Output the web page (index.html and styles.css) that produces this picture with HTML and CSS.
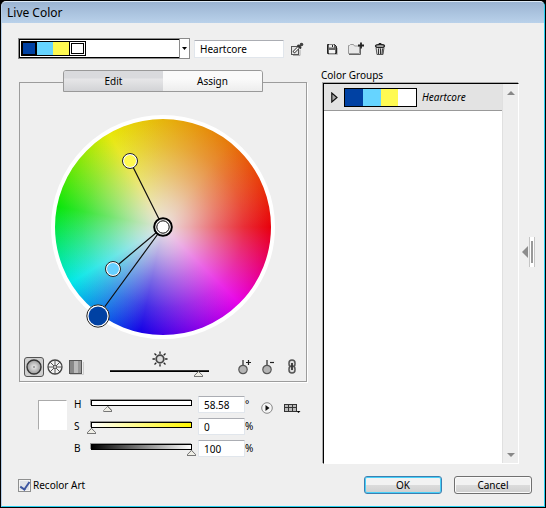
FILE: index.html
```html
<!DOCTYPE html>
<html lang="en">
<head>
<meta charset="utf-8">
<title>Live Color</title>
<link rel="stylesheet" href="styles.css">
</head>
<body>
<form class="dialog">
  <header class="titlebar"><h1>Live Color</h1></header>

  <div class="toolbar">
    <div class="combo">
      <div class="chips">
        <span class="chip navy picked"></span><span class="chip sky"></span><span class="chip yellow"></span><span class="chip white base"></span>
      </div>
      <button type="button" class="combo-arrow" aria-label="Harmony rules"><svg width="6" height="4" viewBox="0 0 6 4"><path d="M0 0h5L2.500 3z"/></svg></button>
    </div>
    <input class="field name" type="text" value="Heartcore" aria-label="Group name">
    <button type="button" class="icon pick" aria-label="Get colors from selected art">
      <svg width="14" height="14" viewBox="0 0 14 14"><path d="M3 13.500h7V8" fill="none" stroke="#aaa"/><rect x="1.500" y="4.500" width="7" height="8" fill="#e4e4e4" stroke="#555"/><path d="M3.500 10.500L8.500 5.500" stroke="#333" stroke-width="2.800"/><path d="M4 10L8.500 5.500" stroke="#fff" stroke-width="1.200"/><path d="M7.500 3l3.500 3.500M9 5l2.500-2.500" stroke="#333" stroke-width="2"/><circle cx="11.500" cy="2.500" r="1.800" fill="#444"/></svg>
    </button>
    <div class="group-tools">
      <button type="button" class="icon" aria-label="Save changes">
        <svg width="14" height="14" viewBox="0 0 14 14"><path d="M2.500 2.500h7l2 2v7h-9z" fill="#666" stroke="#222"/><path d="M4 2.500h5v3H4z" fill="#eee"/><path d="M7.500 3v2" stroke="#222"/><path d="M4 8h6v3.500H4z" fill="#f4f4f4"/><path d="M3 12.500h9.500V6" stroke="#bbb" fill="none"/></svg>
      </button>
      <button type="button" class="icon" aria-label="New color group">
        <svg width="18" height="14" viewBox="0 0 18 14"><path d="M1.500 11.500v-8h1l1-1h3l1 1.500h5v7.500z" fill="#e8e8e8" stroke="#999"/><path d="M2 12.500h11.500V6" fill="none" stroke="#666"/><path d="M14 .5v6M11 3.500h6" stroke="#222" stroke-width="1.800"/></svg>
      </button>
      <button type="button" class="icon" aria-label="Delete color group">
        <svg width="14" height="14" viewBox="0 0 14 14"><path d="M3 5.500h8l-1 7H4z" fill="#ddd" stroke="#555"/><path d="M5.500 6.500v5.500M7.500 6.500v5.500M9.500 6.500L9 12" stroke="#333"/><ellipse cx="7" cy="4" rx="4.500" ry="1.500" fill="#ccc" stroke="#222" stroke-width="1.300"/><path d="M5.500 2q1.500-1.500 3 0" stroke="#222" fill="none"/></svg>
      </button>
    </div>
  </div>

  <main class="columns">
    <section class="editor">
      <div class="panel">
        <div class="tabs">
          <button type="button" class="tab current">Edit</button><button type="button" class="tab">Assign</button>
        </div>
        <div class="wheel">
          <svg viewBox="0 0 224 224">
            <g stroke="#111" stroke-width="1.200"><path d="M112 112L79 46M112 112L62 154M112 112L47 201"/></g>
            <g stroke="#222">
              <circle cx="79" cy="46" r="7.500" fill="#fff"/><circle cx="62" cy="154" r="7.500" fill="#fff"/><circle cx="47" cy="201" r="11.200" fill="#fff"/>
            </g>
            <circle cx="79" cy="46" r="6" fill="#fffa52"/><circle cx="62" cy="154" r="6" fill="#66d0ff"/><circle cx="47" cy="201" r="9.500" fill="#0041a3"/>
            <circle cx="112" cy="112" r="8.800" fill="#fff" stroke="#000" stroke-width="2"/><circle cx="112" cy="112" r="6.200" fill="#fff" stroke="#000"/>
          </svg>
        </div>
        <div class="wheel-tools">
          <button type="button" class="icon mode on" aria-label="Smooth wheel">
            <svg width="18" height="18" viewBox="0 0 18 18"><defs><radialGradient id="ball"><stop offset="0" stop-color="#eee"/><stop offset="1" stop-color="#999"/></radialGradient></defs><circle cx="9" cy="9" r="7" fill="url(#ball)" stroke="#333" stroke-width="1.400"/><path d="M8 9h2M9 8v2" stroke="#666" stroke-width=".6"/></svg>
          </button>
          <button type="button" class="icon mode" aria-label="Segmented wheel">
            <svg width="18" height="18" viewBox="0 0 18 18"><circle cx="9" cy="9" r="7" fill="#f2f2f2" stroke="#444" stroke-width="1.300"/><path d="M9 2v14M2 9h14M4 4l10 10M14 4L4 14" stroke="#555"/><circle cx="9" cy="9" r="1.500" fill="#eee" stroke="#333" stroke-width=".7"/></svg>
          </button>
          <button type="button" class="icon mode" aria-label="Color bars">
            <svg width="18" height="18" viewBox="0 0 18 18"><path d="M3 16.500h13.500V4" stroke="#ccc" fill="none"/><rect x="2.500" y="2.500" width="12" height="13" fill="#aaa" stroke="#555"/><path d="M3 3h4v12H3z" fill="#888"/><path d="M7 3h4v12H7z" fill="#bbb"/><path d="M11 3h3v12h-3z" fill="#999"/></svg>
          </button>
          <div class="brightness">
            <svg width="16" height="16" viewBox="0 0 16 16"><path d="M8 .5v15M.5 8h15M2.500 2.500l11 11M13.500 2.500l-11 11" stroke="#222" stroke-width="1.300"/><circle cx="8" cy="8" r="5.200" fill="#eee"/><circle cx="8" cy="8" r="3.800" fill="#ddd" stroke="#444" stroke-width="1.800"/></svg>
            <div class="track line"><input type="range" min="0" max="100" value="89" aria-label="Brightness"></div>
          </div>
          <button type="button" class="icon add" aria-label="Add color tool">
            <svg width="16" height="18" viewBox="0 0 16 18"><path d="M6 2v7" stroke="#333" stroke-width="1.300"/><circle cx="6" cy="11.500" r="4.200" fill="#b4b4b4" stroke="#555" stroke-width="1.200"/><path d="M9 4.500h5M11.500 2v5" stroke="#222" stroke-width="1.200"/></svg>
          </button>
          <button type="button" class="icon remove" aria-label="Remove color tool">
            <svg width="16" height="18" viewBox="0 0 16 18"><path d="M6 2v7" stroke="#333" stroke-width="1.300"/><circle cx="6" cy="11.500" r="4.200" fill="#b4b4b4" stroke="#555" stroke-width="1.200"/><path d="M9 4.500h4" stroke="#222" stroke-width="1.200"/></svg>
          </button>
          <button type="button" class="icon chain" aria-label="Link harmony colors">
            <svg width="10" height="18" viewBox="0 0 10 18"><rect x="2" y="2" width="6" height="7" rx="3" fill="#ddd" stroke="#555" stroke-width="1.500"/><rect x="2" y="8" width="6" height="7" rx="3" fill="#ddd" stroke="#555" stroke-width="1.500"/><path d="M5 5v7" stroke="#333" stroke-width="1.800"/></svg>
          </button>
        </div>
      </div>

      <div class="hsb">
        <span class="preview"></span>
        <div class="sliders">
          <label for="h">H</label><div class="track"><input type="range" min="0" max="360" value="59" aria-label="Hue"></div><input class="field" id="h" type="text" value="58.58"><span>°</span>
          <label for="s">S</label><div class="track saturation"><input type="range" min="0" max="100" value="0" aria-label="Saturation"></div><input class="field" id="s" type="text" value="0"><span>%</span>
          <label for="b">B</label><div class="track value"><input type="range" min="0" max="100" value="100" aria-label="Value"></div><input class="field" id="b" type="text" value="100"><span>%</span>
        </div>
        <button type="button" class="icon" aria-label="Color mode">
          <svg width="12" height="12" viewBox="0 0 12 12"><circle cx="6" cy="6" r="5.300" fill="#f6f6f6" stroke="#888"/><path d="M4.500 3v6L8.500 6z" fill="#111"/></svg>
        </button>
        <button type="button" class="icon library" aria-label="Limit to swatch library">
          <svg width="17" height="12" viewBox="0 0 17 12"><path d="M0 2h13v8H0z" fill="#333"/><path d="M1 3h3v2H1zM5 3h3v2H5zM9 3h3v2H9zM1 6h3v3H1zM5 6h3v3H5zM9 6h3v3H9z" fill="#bbb"/><path d="M12.500 9h4l-2 2z" fill="#000"/></svg>
        </button>
      </div>
    </section>

    <section class="groups">
      <h2>Color Groups</h2>
      <div class="list">
        <div class="rows">
          <div class="row">
            <svg width="7" height="11" viewBox="0 0 7 11"><path d="M.8 1v9L6 5.500z" fill="#aaa" stroke="#111" stroke-width="1.200"/></svg>
            <span class="strip"><i class="navy"></i><i class="sky"></i><i class="yellow"></i><i class="white"></i></span>
            <em>Heartcore</em>
          </div>
        </div>
        <div class="scrollbar">
          <svg width="8" height="4" viewBox="0 0 8 4"><path d="M0 4h8L4 0z"/></svg>
          <svg width="8" height="4" viewBox="0 0 8 4"><path d="M0 0h8L4 4z"/></svg>
        </div>
      </div>
    </section>

    <button type="button" class="collapse" aria-label="Hide color groups">
      <svg width="14" height="30" viewBox="0 0 14 30"><path d="M0 15l6-6v12z" fill="#8c8c8c"/><path d="M7.500 0v30M12.500 0v30" stroke="#c4c4c4"/><path d="M8 0h4v30H8z" fill="#fff"/><path d="M10 4v22" stroke="#999" stroke-width="2"/></svg>
    </button>
  </main>

  <footer class="footer">
    <label class="recolor"><input type="checkbox" checked>Recolor Art</label>
    <button type="button" class="push default">OK</button>
    <button type="button" class="push">Cancel</button>
  </footer>
</form>
</body>
</html>
```

FILE: styles.css
```css
* { box-sizing: border-box; }

body {
  margin: 0;
  background: #000;
  font: 10px/14px "Noto Sans", "Open Sans", sans-serif;
  color: #000;
}

h1, h2 { margin: 0; font-weight: 400; }

button, input { font: inherit; color: inherit; margin: 0; }

.dialog {
  min-height: calc(100vh - 2px);
  margin: 1px;
  border: 1px solid #b4cde8;
  border-right-color: #28cff0;
  border-bottom-color: #28cff0;
  border-top-color: #dce9f5;
  border-radius: 5px 5px 0 0;
  background: #efefef;
  display: flex;
  flex-direction: column;
}

.titlebar {
  height: 21px;
  padding: 0 5px;
  border-radius: 4px 4px 0 0;
  background: linear-gradient(#9bb4d2, #b9d1ea);
}

.titlebar h1 { font-size: 12px; line-height: 21px; }

.icon {
  padding: 0;
  border: 0;
  background: none;
  display: flex;
  align-items: center;
  justify-content: center;
}

.navy { background: #0041a3; }
.sky { background: #66d4ff; }
.yellow { background: #fffa52; }
.white { background: #fff; }

.field {
  min-width: 0;
  height: 17px;
  padding: 0 5px;
  border: 1px solid #e1e6ec;
  border-top-color: #abadb3;
  border-radius: 1px;
  background: #fff;
}

/* Toolbar */
.toolbar {
  display: flex;
  align-items: center;
  padding: 15px 16px 0;
}

.combo {
  width: 172px;
  height: 21px;
  display: flex;
  justify-content: space-between;
  border: 1px solid #8a8a8a;
  background: #fff;
}

.chips {
  flex: 1;
  display: flex;
  padding: 1px;
  border: solid #000;
  border-width: 1px 0 1px 1px;
}

.chip { width: 16px; }
.chip.picked { border: 2px solid #000; }
.chip.sky, .chip.yellow { border: solid #000; border-width: 1px 0; }
.chip.base { width: 17px; border: 1px solid #000; padding: 1px; display: flex; }
.chip.base::after { content: ""; flex: 1; border: 1px solid #000; }

.combo-arrow {
  width: 10px;
  padding: 0;
  border: 0;
  border-left: 1px solid #8a8a8a;
  background: #fff;
  display: flex;
  align-items: center;
  justify-content: center;
}

.name { width: 90px; height: 18px; margin-left: 4px; }
.pick { margin-left: 6px; }
.group-tools { display: flex; gap: 8px; margin-left: 21px; }

/* Columns */
.columns {
  flex: 1;
  display: flex;
  padding: 0 8px 0 17px;
}

.editor { width: 288px; padding-top: 23px; }

.panel {
  border: 1px solid #9c9c9c;
  box-shadow: 1px 1px 0 #fff;
  padding: 0 4px 3px;
}

.tabs {
  width: 200px;
  height: 22px;
  margin: -13px 0 0 39px;
  display: flex;
  border: 1px solid #999;
  border-radius: 3px 3px 0 0;
  overflow: hidden;
}

.tab {
  flex: 1;
  padding: 0;
  border: 0;
  background: linear-gradient(#fafafa 40%, #ededed);
}

.tab.current { background: linear-gradient(#d9dadd 35%, #e6e6e8 40%, #d2d3d6); }

.wheel {
  width: 224px;
  height: 224px;
  margin: 23px auto 0;
  border: 4px solid #fff;
  border-radius: 50%;
  background:
    radial-gradient(closest-side, rgb(236 228 228), rgb(236 228 228 / .75) 25%, rgb(236 228 228 / .46) 50%, rgb(236 228 228 / .2) 75%, rgb(236 228 228 / 0)),
    conic-gradient(from 90deg, #e8000c, #e800e8 45deg, #1400e6 102deg, #00e8e8 149deg, #08e608 191deg, #e8e808 240deg, #e6b40a 270deg, #e6780a 308deg, #e83a0a 335deg, #e8000c);
}

.wheel svg { display: block; width: 224px; margin: -4px; overflow: visible; }

.wheel-tools {
  height: 36px;
  margin-top: 3px;
  display: flex;
  align-items: center;
}

.mode { width: 20px; height: 20px; border: 1px solid transparent; margin-right: 1px; margin-top: 14px; }
.mode.on { border-color: #555; border-radius: 3px; background: #cfcfcf; }

.brightness {
  flex: 1;
  align-self: flex-start;
  margin: 9px 24px 0 23px;
}

.brightness svg { display: block; margin: 0 auto; }

.add, .remove { width: 24px; }
.chain { width: 21px; }
.add, .remove, .chain { margin-top: 14px; }

.track {
  height: 6px;
  border: 1px solid #000;
  box-shadow: -1px -1px 0 #999;
  background: #fff;
}

.track.line { height: 2px; border: 0; border-top: 1px solid #333; margin-top: 3px; background: #000; box-shadow: none; }
.track.saturation { background: linear-gradient(90deg, #fff, #fff600); }
.track.value { background: linear-gradient(90deg, #000, #fff); }

.track input {
  appearance: none;
  display: block;
  width: calc(100% + 10px);
  height: 6px;
  margin: 5px -5px 0;
  background: none;
}

.track.line input { margin-top: 0; }

.track input::-webkit-slider-thumb {
  appearance: none;
  width: 9px;
  height: 6px;
  background: conic-gradient(from 138deg at 50% 1px, #efeee6 84deg, #777 0) 0 0 / 100% 5px no-repeat #777;
  clip-path: polygon(50% 0, 100% 80%, 100% 100%, 0 100%, 0 80%);
}

/* HSB sliders */
.hsb {
  display: flex;
  align-items: flex-start;
  padding: 14px 6px 0 19px;
}

.preview {
  width: 29px;
  height: 30px;
  margin-top: 4px;
  border: 1px solid #aaa;
  border-right-color: #fff;
  border-bottom-color: #fff;
  background: #fff;
}

.sliders {
  flex: 1;
  margin: 0 5px 0 7px;
  display: grid;
  grid-template-columns: 17px 1fr 47px 11px;
  grid-auto-rows: 17px;
  row-gap: 5px;
}

.sliders .track { margin: 4px 6px 0 0; }
.sliders label { line-height: 16px; }
.sliders span { line-height: 16px; }
.hsb .icon { margin-top: 6px; }
.hsb .library { margin-left: 11px; }

/* Color groups */
.groups {
  flex: 1;
  min-width: 0;
  margin-left: 14px;
  padding-top: 8px;
  display: flex;
  flex-direction: column;
}

.groups h2 { font-size: 10px; line-height: 16px; }

.list {
  flex: 1;
  margin-left: 2px;
  display: flex;
  border: 1px solid #000;
  border-right-color: #fff;
  border-bottom-color: #fff;
  box-shadow: -1px -1px 0 #aaa;
  background: #fff;
}

.rows { flex: 1; }

.row {
  height: 27px;
  padding-left: 7px;
  display: flex;
  align-items: center;
  gap: 6px;
  border-bottom: 1px solid #999;
  background: #e3e3e3;
}

.strip { width: 73px; height: 19px; display: flex; border: 1px solid #000; }
.strip i { flex: 1; }
.row em { margin-left: -1px; }

.scrollbar {
  width: 16px;
  padding: 7px 0 6px;
  display: flex;
  flex-direction: column;
  align-items: center;
  justify-content: space-between;
  border-left: 1px solid #e0e0e0;
  background: #eee;
  fill: #888;
}

.collapse {
  align-self: center;
  margin: 0 0 20px 3px;
  padding: 0;
  border: 0;
  background: none;
}

.collapse svg { display: block; }

/* Footer */
.footer {
  display: flex;
  align-items: center;
  gap: 12px;
  padding: 12px 12px 12px 16px;
}

.recolor {
  flex: 1;
  display: flex;
  align-items: center;
  gap: 2px;
}

.recolor input {
  appearance: none;
  width: 13px;
  height: 13px;
  border: 1px solid #8e8f8f;
  box-shadow: inset 0 0 0 1px #f4f4f4;
  background: #dfe2e8;
  display: flex;
  justify-content: center;
}

.recolor input:checked::after {
  content: "";
  width: 4px;
  height: 8px;
  border: solid #3c55a0;
  border-width: 0 2px 2px 0;
  transform: rotate(35deg);
}

.push {
  width: 78px;
  height: 18px;
  padding: 0;
  border: 1px solid #707070;
  border-radius: 3px;
  box-shadow: inset 0 0 0 1px #fafafa;
  background: linear-gradient(#f2f2f2 50%, #dcdcdc 50%, #cfcfcf);
}

.push.default { border-color: #3c7fb1; box-shadow: inset 0 0 0 1px #48d0f8; }
```
